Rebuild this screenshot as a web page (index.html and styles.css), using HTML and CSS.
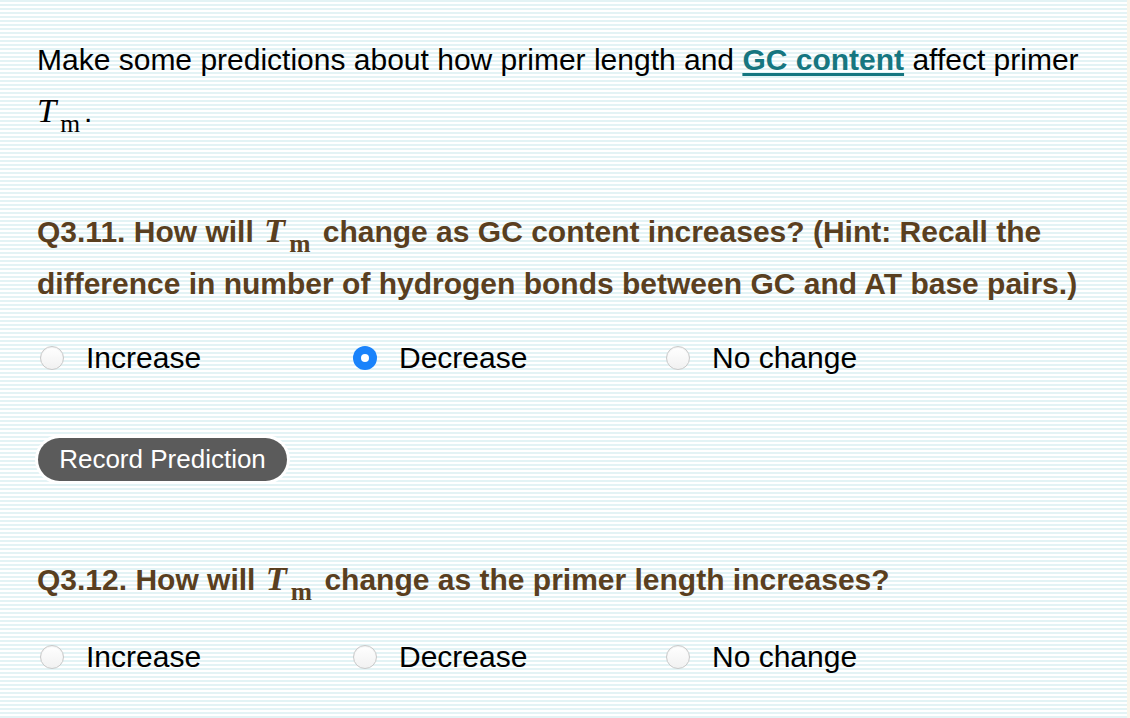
FILE: index.html
```html
<!DOCTYPE html>
<html>
<head>
<meta charset="utf-8">
<link rel="stylesheet" href="styles.css">
</head>
<body>
<div class="page">
  <main class="content">
    <p class="intro">Make some predictions about how primer length and <a class="term" href="#">GC content</a> affect primer <span class="math"><span class="mi">T</span><sub class="sub">m</sub></span>.</p>

    <section class="question q1">
      <h3 class="qtitle">Q3.11. How will <span class="math"><span class="mi">T</span><sub class="sub">m</sub></span> change as GC content increases? (Hint: Recall the difference in number of hydrogen bonds between GC and AT base pairs.)</h3>
      <div class="choices">
        <label class="choice"><span class="radio"></span><span class="label">Increase</span></label>
        <label class="choice"><span class="radio checked"></span><span class="label">Decrease</span></label>
        <label class="choice"><span class="radio"></span><span class="label">No change</span></label>
      </div>
      <div class="actions"><button class="btn">Record Prediction</button></div>
    </section>

    <section class="question q2">
      <h3 class="qtitle">Q3.12. How will <span class="math"><span class="mi">T</span><sub class="sub">m</sub></span> change as the primer length increases?</h3>
      <div class="choices">
        <label class="choice"><span class="radio"></span><span class="label">Increase</span></label>
        <label class="choice"><span class="radio"></span><span class="label">Decrease</span></label>
        <label class="choice"><span class="radio"></span><span class="label">No change</span></label>
      </div>
    </section>
  </main>
  <aside class="edge"></aside>
</div>
</body>
</html>
```

FILE: styles.css
```css
html, body {
  margin: 0;
  padding: 0;
  height: 100%;
}
body {
  font-family: "Liberation Sans", Arial, sans-serif;
  color: #000;
  overflow: hidden;
}
.page {
  display: flex;
  height: 718px;
}
.content {
  flex: 1;
  padding: 34px 0 0 37px;
  background: repeating-linear-gradient(to bottom, #e3f3f5 0, #e3f3f5 2px, #ffffff 2px, #ffffff 4px);
}
.edge {
  width: 3px;
  background: #f9f5ea;
}
.intro {
  margin: 0;
  font-size: 30px;
  line-height: 52px;
  width: 1065px;
}
.term {
  color: #167680;
  font-weight: bold;
  text-decoration: underline;
  text-underline-offset: 3px;
}
.math {
  font-family: "Liberation Serif", "Times New Roman", serif;
  white-space: nowrap;
  line-height: 0;
}
.mi {
  font-style: italic;
  font-size: 1.15em;
  line-height: 0;
}
.sub {
  font-size: 0.85em;
  vertical-align: -0.4em;
  line-height: 0;
  margin-left: 4px;
}
.intro .math {
  margin-right: 4px;
}
.question {
  margin: 0;
}
.q1 {
  margin-top: 68px;
}
.qtitle {
  margin: 0;
  color: #5a3f1f;
  font-size: 30px;
  line-height: 52px;
  font-weight: bold;
  width: 1065px;
}
.qtitle .mi {
  font-weight: bold;
}
.qtitle .math {
  margin-left: 2px;
  margin-right: 4px;
}
.choices {
  display: grid;
  grid-template-columns: 313px 313px 313px;
  margin-top: 28px;
  height: 40px;
  align-items: center;
}
.choice {
  display: flex;
  align-items: center;
  gap: 22px;
  font-size: 30px;
  padding-left: 3px;
}
.radio {
  width: 22px;
  height: 22px;
  border-radius: 50%;
  border: 1px solid #c9c9c9;
  background: linear-gradient(to bottom, #ffffff, #f1f1f1);
  box-shadow: inset 0 1px 1px rgba(0,0,0,0.06);
  flex: none;
  box-sizing: content-box;
}
.radio.checked {
  width: 24px;
  height: 24px;
  border: none;
  background: #1a83fb;
  box-shadow: none;
  position: relative;
}
.radio.checked::after {
  content: "";
  position: absolute;
  left: 8px;
  top: 8px;
  width: 8px;
  height: 8px;
  border-radius: 50%;
  background: #fff;
}
.actions {
  margin-top: 60px;
  padding-left: 1px;
}
.btn {
  font-family: "Liberation Sans", Arial, sans-serif;
  font-size: 26px;
  color: #fff;
  background: #5b5b5b;
  border: none;
  border-radius: 22px;
  height: 43px;
  width: 249px;
  padding: 0;
  box-shadow: 0 0 0 3px #fff;
}
.q2 {
  margin-top: 73px;
}
.q2 .choices {
  margin-top: 31px;
}
```
